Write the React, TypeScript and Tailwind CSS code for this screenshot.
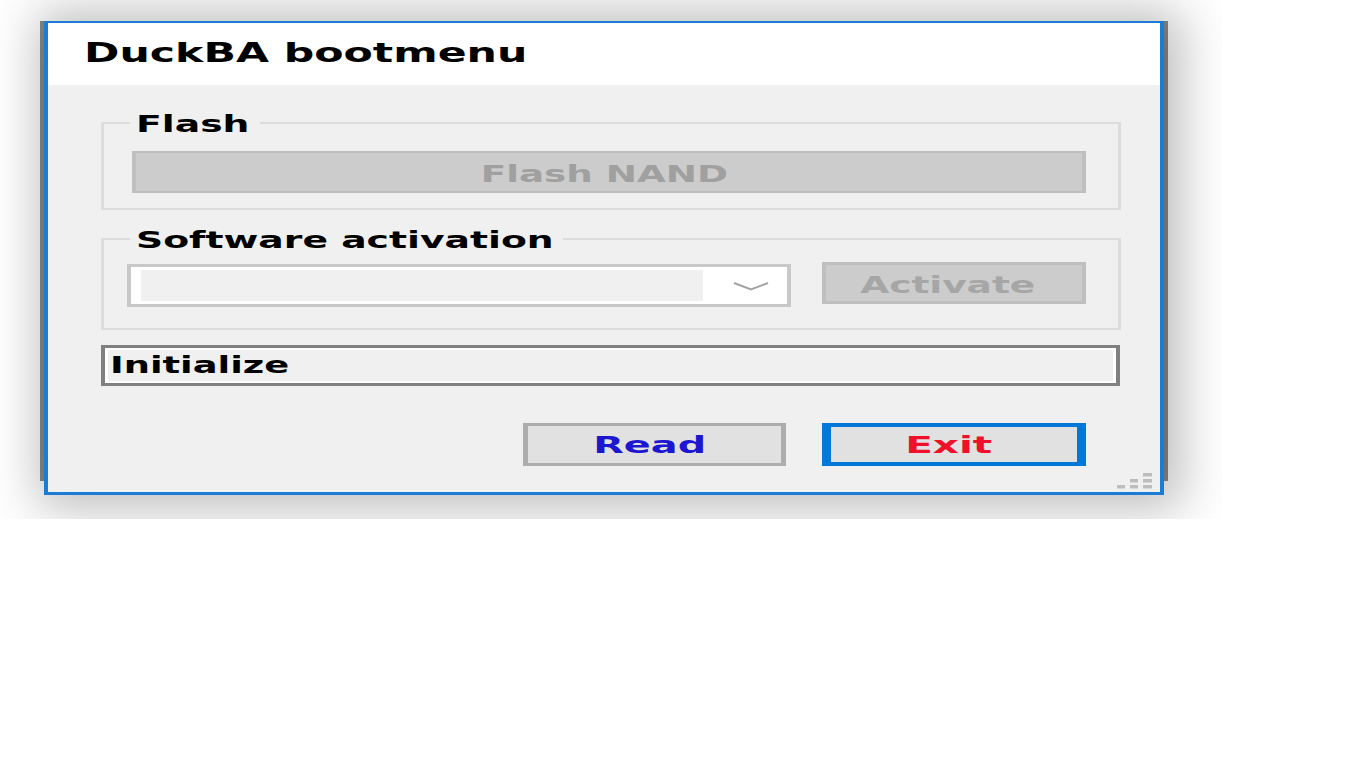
const textBase = "inline-block whitespace-nowrap text-[23px] font-bold";

function GroupBox({
  label,
  labelWidth,
  className,
  children,
}: {
  label: string;
  labelWidth: string;
  className: string;
  children: React.ReactNode;
}) {
  return (
    <div className={`relative w-[1020px] border-x-[3px] border-y-2 border-[#dcdcdc] ${className}`}>
      <div className={`absolute -top-[12px] left-[26px] h-[24px] bg-[#f0f0f0] pl-[6px] ${labelWidth}`}>
        <span className={`${textBase} origin-left scale-x-[1.64] leading-[24px] text-black`}>{label}</span>
      </div>
      {children}
    </div>
  );
}

function Chevron() {
  return (
    <svg width="36" height="10" viewBox="0 0 36 10" fill="none" aria-hidden>
      <path d="M1 2 L18 8.5 L35 2" stroke="#a3a3a3" strokeWidth="2" />
    </svg>
  );
}

function ResizeGrip() {
  return (
    <svg
      className="absolute bottom-[3px] right-[8px]"
      width="35"
      height="16"
      viewBox="0 0 35 16"
      aria-hidden
    >
      <rect x="26" y="0" width="9" height="3.5" fill="#bdbdbd" />
      <rect x="26" y="6" width="9" height="3.5" fill="#bdbdbd" />
      <rect x="26" y="12" width="9" height="3.5" fill="#bdbdbd" />
      <rect x="13" y="6" width="8" height="3.5" fill="#bdbdbd" />
      <rect x="13" y="12" width="8" height="3.5" fill="#bdbdbd" />
      <rect x="0" y="12" width="8" height="3.5" fill="#bdbdbd" />
    </svg>
  );
}

export default function App() {
  return (
    <div className="h-[519px] w-[1222px] overflow-hidden bg-white pl-[40px] pt-[21px] font-['DejaVu_Sans',sans-serif]">
      {/* window shadow edge */}
      <div className="h-[460px] w-[1128px] border-x-4 border-[#8c8c8c]">
        <div className="relative flex h-[474px] w-[1120px] flex-col border-x-4 border-t-2 border-b-[3px] border-[#1c7cd5] bg-[#f0f0f0] shadow-[6px_2px_46px_12px_rgba(0,0,0,0.26)]">
          <div className="flex h-[62px] items-center bg-white pb-[3px] pl-[36px]">
            <span className="inline-block origin-left scale-x-[1.64] whitespace-nowrap text-[26px] font-bold leading-[30px] text-black">
              DuckBA bootmenu
            </span>
          </div>

          <div className="flex-1 pl-[53px]">
            <GroupBox label="Flash" labelWidth="w-[130px]" className="mt-[37px] h-[88px] pl-[28px] pt-[27px]">
              <button className="flex h-[42px] w-[954px] items-center justify-center border-x-4 border-y-2 border-[#bfbfbf] bg-[#cccccc] pr-[10px] pt-[4px] text-[#a0a0a0]">
                <span className={`${textBase} scale-x-[1.62] leading-[27px]`}>Flash NAND</span>
              </button>
            </GroupBox>

            <GroupBox
              label="Software activation"
              labelWidth="w-[433px]"
              className="mt-[28px] flex h-[92px] items-start gap-[31px] pl-[23px] pt-[22px]"
            >
              <div className="mt-[2px] flex h-[43px] w-[664px] border-x-4 border-y-[3px] border-[#c8c8c8] bg-white py-[3px] pl-[10px]">
                <div className="w-[562px] bg-[#f0f0f0]" />
                <div className="flex flex-1 items-center pl-[30px]">
                  <Chevron />
                </div>
              </div>
              <button className="flex h-[42px] w-[264px] items-center justify-center border-x-4 border-y-[3px] border-[#bfbfbf] bg-[#cccccc] pr-[12px] pt-[5px] text-[#a6a6a6]">
                <span className={`${textBase} scale-x-[1.63] leading-[27px]`}>Activate</span>
              </button>
            </GroupBox>

            <div className="mt-[15px] h-[41px] w-[1019px] border-x-4 border-y-[3px] border-[#808080]">
              <div className="flex h-full items-center border-x-[3px] border-y-2 border-white bg-[#f0f0f0] pl-[2px]">
                <span className={`${textBase} origin-left scale-x-[1.6] leading-[31px] text-black`}>Initialize</span>
              </div>
            </div>

            <div className="mt-[37px] flex w-[1020px] justify-end gap-[36px] pr-[35px]">
              <button className="flex h-[43px] w-[263px] items-center justify-center border-x-[5px] border-y-[3px] border-[#adadad] bg-[#e1e1e1] pr-[10px] pt-[2px] text-[#1d16d0]">
                <span className={`${textBase} scale-x-[1.73] leading-[27px]`}>Read</span>
              </button>
              <button className="flex h-[43px] w-[264px] items-center justify-center border-x-[9px] border-y-4 border-[#0078d7] bg-[#e1e1e1] pr-[10px] pt-[2px] text-[#f0102a]">
                <span className={`${textBase} scale-x-[1.76] leading-[27px]`}>Exit</span>
              </button>
            </div>
          </div>

          <ResizeGrip />
        </div>
      </div>
    </div>
  );
}
